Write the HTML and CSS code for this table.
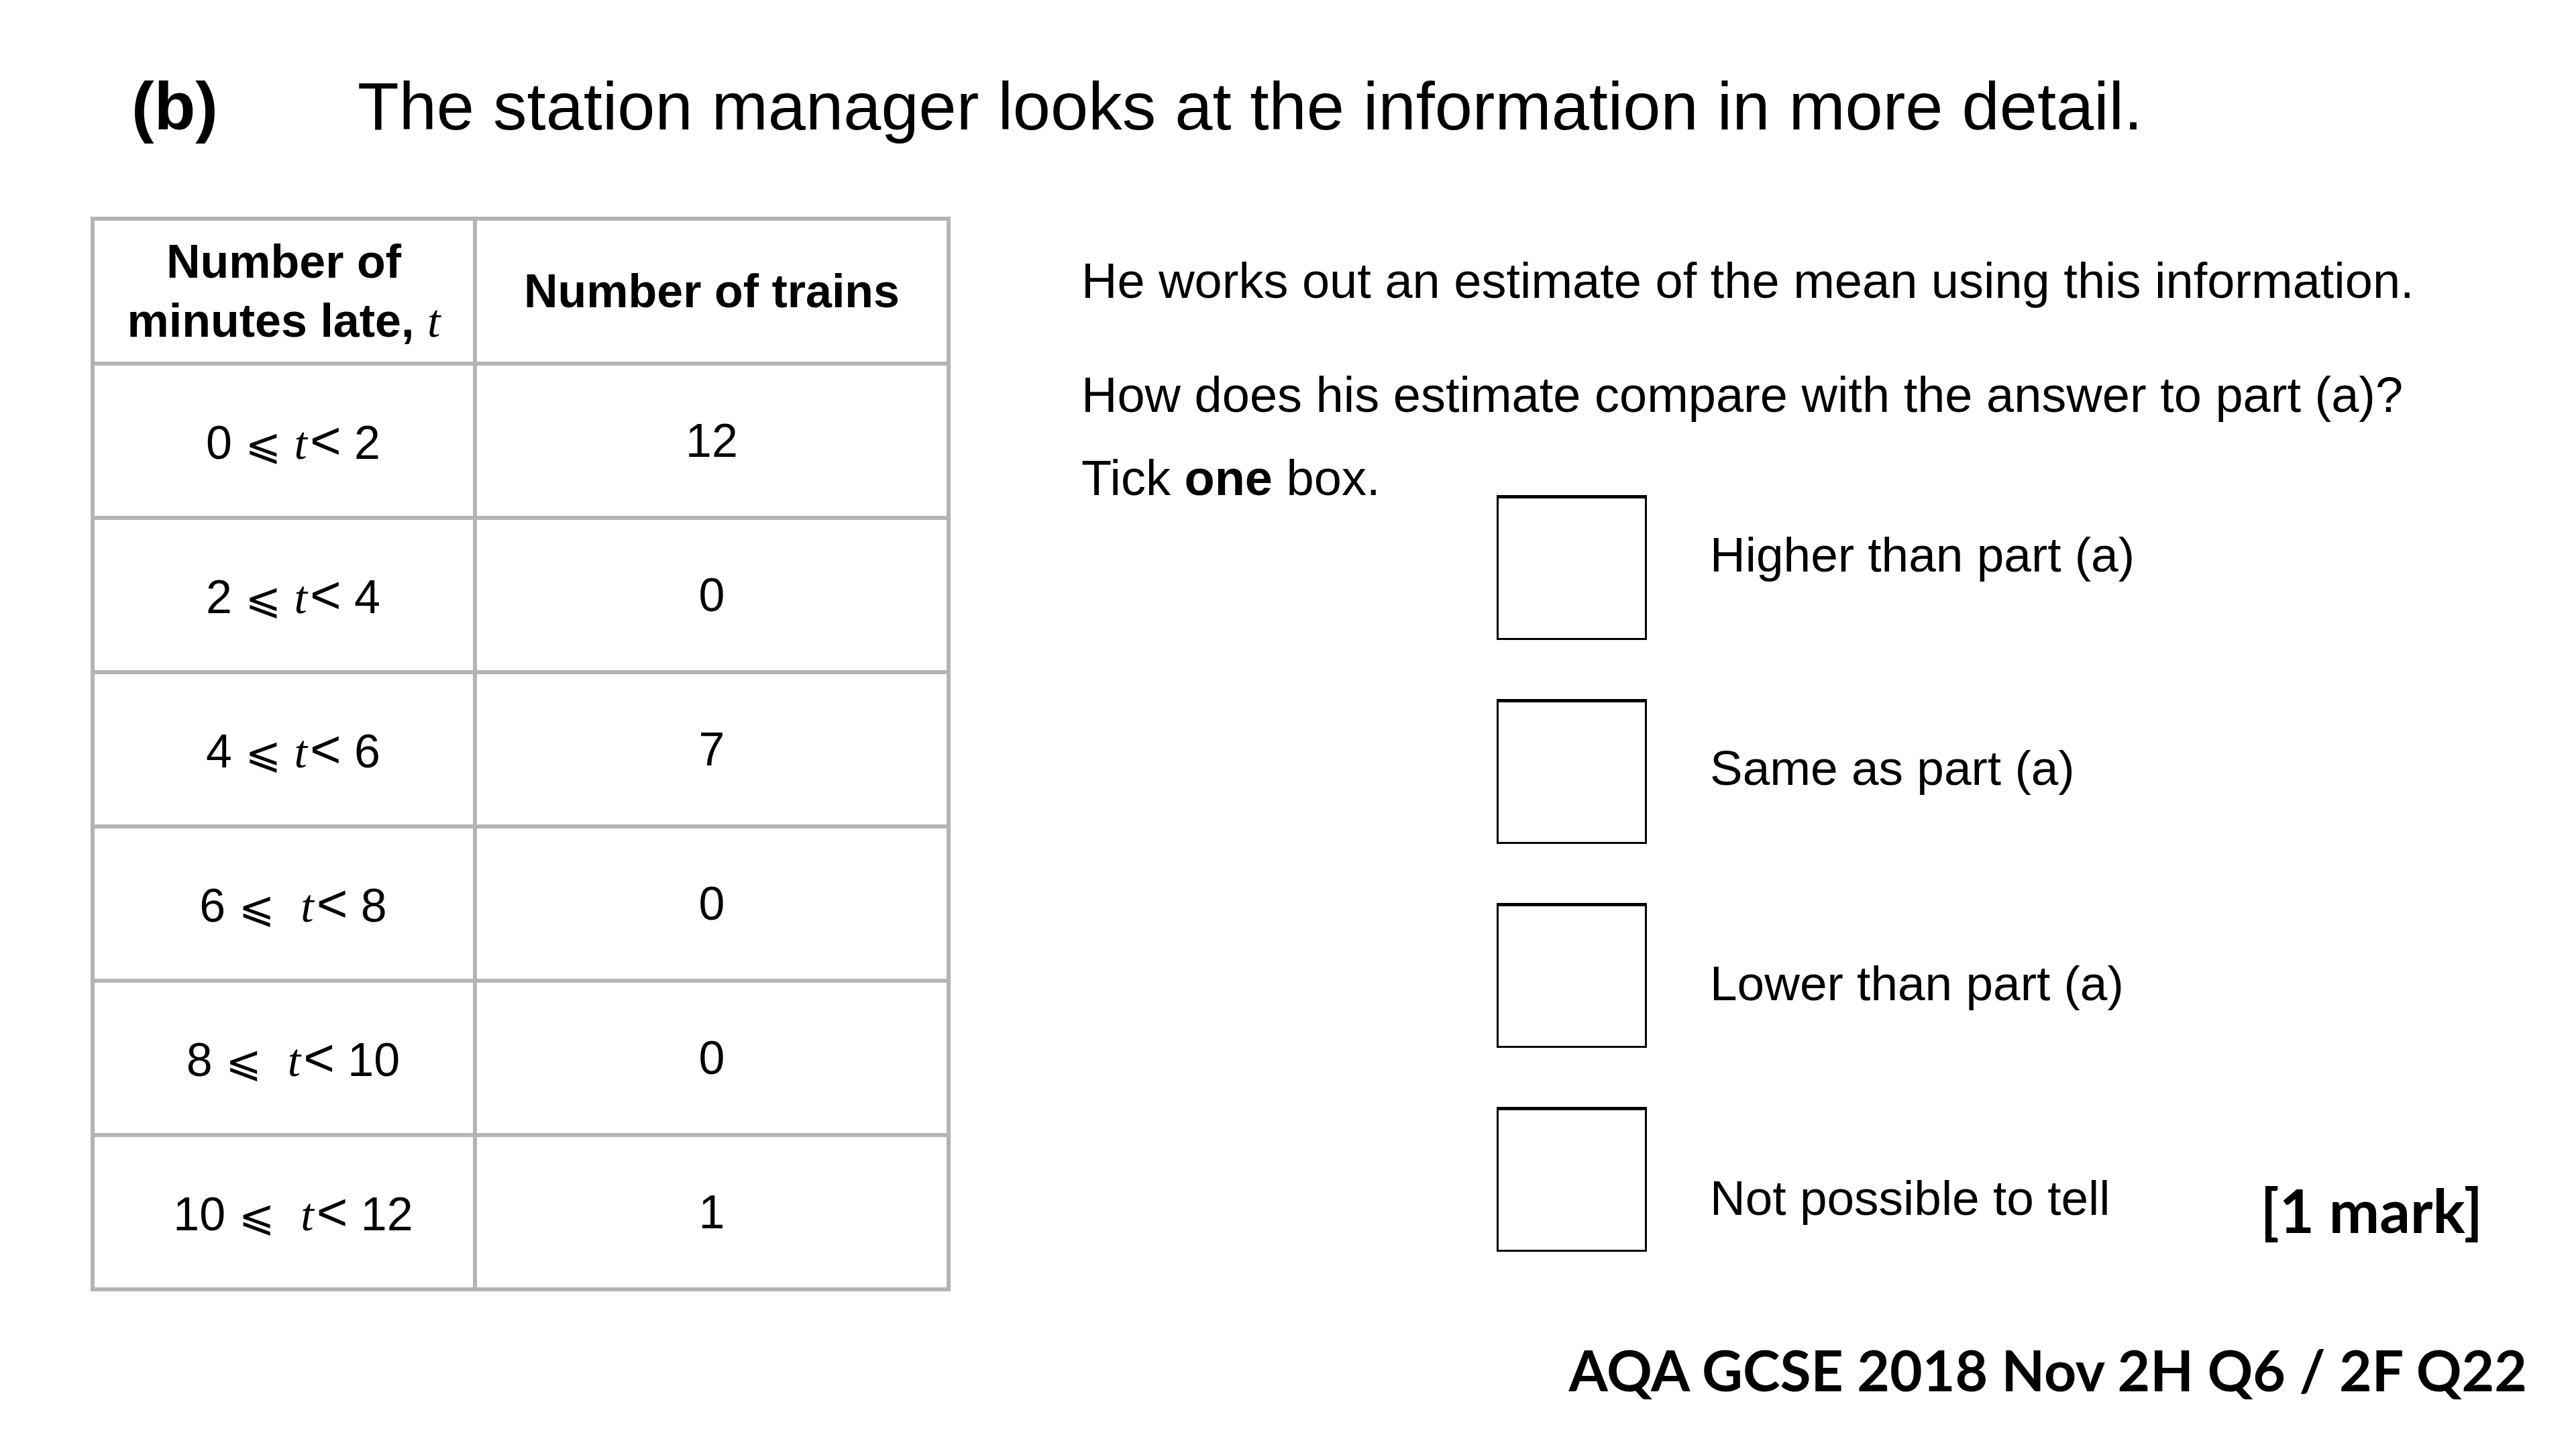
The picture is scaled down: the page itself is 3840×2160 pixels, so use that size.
FILE: index.html
```html
<!DOCTYPE html>
<html lang="en">
<head>
<meta charset="utf-8">
<title>Question (b)</title>
<link rel="stylesheet" href="styles.css">
</head>
<body>
<div class="page">
  <div class="heading">
    <span class="part">(b)</span>
    <span class="title">The station manager looks at the information in more detail.</span>
  </div>

  <div class="main">
    <div class="freq">
      <div class="cell head"><span>Number of<br>minutes late, <i class="var">t</i></span></div>
      <div class="cell head"><span>Number of trains</span></div>

      <div class="cell range"><span>0 <span class="leq">⩽</span> <i class="var">t</i><span class="lt">&lt;</span> 2</span></div>
      <div class="cell"><span>12</span></div>

      <div class="cell range"><span>2 <span class="leq">⩽</span> <i class="var">t</i><span class="lt">&lt;</span> 4</span></div>
      <div class="cell"><span>0</span></div>

      <div class="cell range"><span>4 <span class="leq">⩽</span> <i class="var">t</i><span class="lt">&lt;</span> 6</span></div>
      <div class="cell"><span>7</span></div>

      <div class="cell range"><span>6 <span class="leq">⩽</span>&nbsp; <i class="var">t</i><span class="lt">&lt;</span> 8</span></div>
      <div class="cell"><span>0</span></div>

      <div class="cell range"><span>8 <span class="leq">⩽</span>&nbsp; <i class="var">t</i><span class="lt">&lt;</span> 10</span></div>
      <div class="cell"><span>0</span></div>

      <div class="cell range"><span>10 <span class="leq">⩽</span>&nbsp; <i class="var">t</i><span class="lt">&lt;</span> 12</span></div>
      <div class="cell"><span>1</span></div>
    </div>

    <div class="question">
      <p class="q1">He works out an estimate of the mean using this information.</p>
      <p class="q2">How does his estimate compare with the answer to part (a)?</p>
      <div class="tick-row">
        <p class="tick">Tick <b>one</b> box.</p>
        <ul class="options">
          <li class="option opt-1"><span class="box"></span><span class="label">Higher than part (a)</span></li>
          <li class="option opt-2"><span class="box"></span><span class="label">Same as part (a)</span></li>
          <li class="option opt-3"><span class="box"></span><span class="label">Lower than part (a)</span></li>
          <li class="option opt-4"><span class="box"></span><span class="label">Not possible to tell</span><span class="mark">[1 mark]</span></li>
        </ul>
      </div>
    </div>
  </div>

  <div class="source">AQA GCSE 2018 Nov 2H Q6 / 2F Q22</div>
</div>
</body>
</html>
```

FILE: styles.css
```css
html, body {
  margin: 0;
  padding: 0;
  background: #ffffff;
}

body {
  font-family: "Liberation Sans", Arial, sans-serif;
  color: #000000;
}

.page {
  width: 3840px;
  height: 2160px;
  box-sizing: border-box;
  padding-top: 108px;
  overflow: hidden;
}

/* heading */
.heading {
  display: flex;
  padding-left: 196px;
  font-size: 101px;
  line-height: 1;
}

.part {
  font-weight: bold;
  width: 337px;
  flex: none;
}

/* main area */
.main {
  display: flex;
  align-items: flex-start;
  margin-top: 114px;
  padding-left: 135px;
}

.freq {
  display: grid;
  grid-template-columns: 564px 700px;
  grid-template-rows: 210px repeat(6, 224px);
  gap: 6px;
  padding: 6px;
  background: #b4b4b4;
  flex: none;
}

.cell {
  background: #ffffff;
  display: flex;
  align-items: center;
  justify-content: center;
  text-align: center;
  font-size: 70px;
  line-height: 1;
  white-space: pre;
}

.cell.head {
  font-weight: bold;
  line-height: 88px;
  white-space: normal;
}

.cell.range {
  padding-left: 28px;
}

.var {
  font-family: "Liberation Serif", "Times New Roman", serif;
  font-style: italic;
  font-weight: normal;
}

.leq {
  font-family: "DejaVu Sans", sans-serif;
  font-size: 64px;
}

.lt {
  font-size: 80px;
  margin-left: 4px;
}

/* question column */
.question {
  margin-left: 195px;
  padding-top: 59px;
  font-size: 74px;
  line-height: 1;
}

.question p {
  margin: 0;
}

.question .q2 {
  margin-top: 96px;
}

.tick-row {
  display: flex;
  align-items: flex-start;
  margin-top: 50px;
}

.question .tick {
  width: 619px;
  flex: none;
}

.options {
  list-style: none;
  margin: 0;
  padding: 62px 0 0;
  width: 1470px;
  display: flex;
  flex-direction: column;
  gap: 88px;
  font-size: 73px;
}

.option {
  display: flex;
  align-items: flex-start;
}

.box {
  display: block;
  width: 224px;
  height: 216px;
  box-sizing: border-box;
  border: 3px solid #000000;
  border-top-width: 5px;
  flex: none;
}

.label {
  margin-left: 94px;
  white-space: nowrap;
}

.opt-1 .label { padding-top: 52px; }
.opt-2 .label { padding-top: 66px; }
.opt-3 .label { padding-top: 83px; }
.opt-4 .label { padding-top: 99px; }

.mark {
  margin-left: auto;
  padding-top: 108px;
  font-family: Lato, "Open Sans", sans-serif;
  font-weight: 700;
  font-size: 90px;
  line-height: 1;
  white-space: nowrap;
}

/* source */
.source {
  margin-top: 75px;
  padding-right: 73px;
  text-align: right;
  font-family: Lato, "Open Sans", sans-serif;
  font-weight: 700;
  font-size: 84px;
  line-height: 1;
}
```
